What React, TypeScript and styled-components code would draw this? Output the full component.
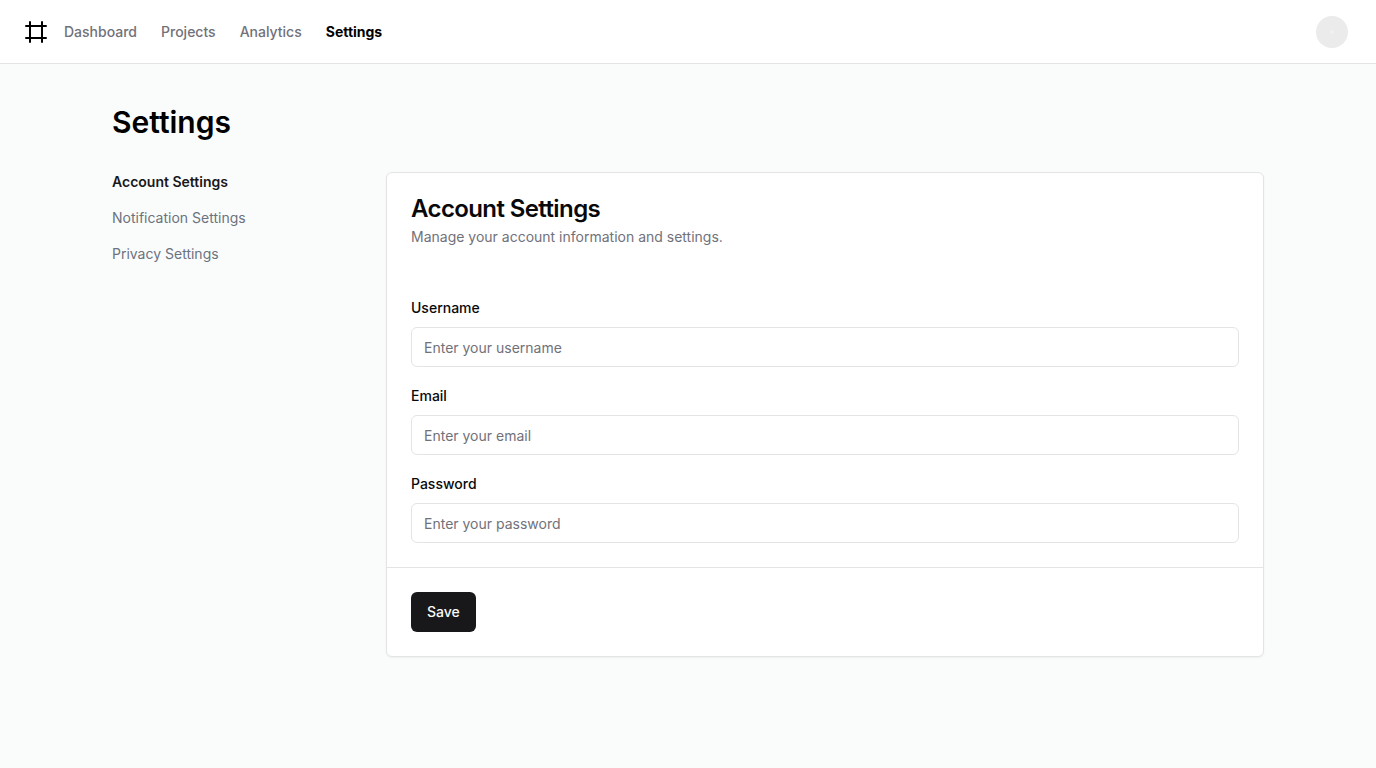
import React from "react";
import styled, { createGlobalStyle } from "styled-components";
import { Frame } from "lucide-react";

const GlobalStyle = createGlobalStyle`
  *, *::before, *::after { box-sizing: border-box; }
  body {
    margin: 0;
    background: #fafcfb;
    color: #09090b;
    font-family: Inter, "Liberation Sans", sans-serif;
    font-size: 14px;
    line-height: 20px;
    font-optical-sizing: none;
  }
  h1, h2, p { margin: 0; }
  a { text-decoration: none; color: inherit; }
`;

const Page = styled.div`
  display: flex;
  flex-direction: column;
  min-height: 100vh;
`;

const Header = styled.header`
  display: flex;
  align-items: center;
  justify-content: space-between;
  height: 64px;
  padding: 0 28px 0 24px;
  background: #ffffff;
  border-bottom: 1px solid #e4e4e7;
`;

const TopNav = styled.nav`
  display: flex;
  align-items: center;
  gap: 24px;
`;

const Logo = styled.a`
  display: flex;
  margin-right: -8px;
  color: #000000;
`;

const TopLink = styled.a<{ $active?: boolean }>`
  color: ${(p) => (p.$active ? "#000000" : "#71717a")};
  font-weight: ${(p) => (p.$active ? 700 : 500)};
`;

const Avatar = styled.button`
  display: flex;
  align-items: center;
  justify-content: center;
  width: 32px;
  height: 32px;
  padding: 0;
  border: 0;
  border-radius: 50%;
  background: #ebebeb;

  &::after {
    content: "";
    width: 4px;
    height: 4px;
    border-radius: 50%;
    background: #f0f0f0;
  }
`;

const Main = styled.main`
  display: flex;
  flex-direction: column;
  gap: 32px;
  width: 100%;
  max-width: 1200px;
  margin: 0 auto;
  padding: 40px 24px;
`;

const PageTitle = styled.h1`
  font-size: 30px;
  line-height: 36px;
  font-weight: 600;
  color: #000000;
`;

const Columns = styled.div`
  display: grid;
  grid-template-columns: 250px 1fr;
  align-items: start;
  gap: 24px;
`;

const SideNav = styled.nav`
  display: flex;
  flex-direction: column;
  gap: 16px;
`;

const SideLink = styled.a<{ $active?: boolean }>`
  color: ${(p) => (p.$active ? "#18181b" : "#6b7280")};
  font-weight: ${(p) => (p.$active ? 600 : 400)};
`;

const Card = styled.section`
  background: #ffffff;
  border: 1px solid #e4e4e7;
  border-radius: 6px;
  box-shadow: 0 1px 2px rgba(0, 0, 0, 0.05);
`;

const CardHeader = styled.div`
  padding: 24px;
`;

const CardTitle = styled.h2`
  font-size: 24px;
  line-height: 24px;
  font-weight: 600;
  letter-spacing: -0.025em;
  margin-bottom: 6px;
`;

const CardDescription = styled.p`
  color: #71717a;
`;

const Fields = styled.div`
  display: flex;
  flex-direction: column;
  gap: 16px;
  padding: 24px;
`;

const Field = styled.div`
  font-size: 16px;
  line-height: 24px;
`;

const Label = styled.label`
  font-size: 14px;
  line-height: 14px;
  font-weight: 500;
`;

const Input = styled.input`
  display: block;
  width: 100%;
  height: 40px;
  margin: 8px 0 0;
  padding: 8px 12px;
  border: 1px solid #e4e4e7;
  border-radius: 6px;
  background: #ffffff;
  color: inherit;
  font: inherit;
  font-size: 14px;
  line-height: 20px;
  &::placeholder { color: #71717a; opacity: 1; }
`;

const CardFooter = styled.div`
  padding: 24px;
  border-top: 1px solid #e4e4e7;
`;

const SaveButton = styled.button`
  height: 40px;
  padding: 8px 16px;
  border: 0;
  border-radius: 6px;
  background: #18181b;
  color: #fafafa;
  font: inherit;
  font-weight: 500;
`;

const topLinks = ["Dashboard", "Projects", "Analytics", "Settings"];
const sections = ["Account Settings", "Notification Settings", "Privacy Settings"];
const fields = [
  { id: "username", label: "Username", type: "text" },
  { id: "email", label: "Email", type: "email" },
  { id: "password", label: "Password", type: "password" },
];

export default function App() {
  return (
    <Page>
      <GlobalStyle />
      <Header>
        <TopNav>
          <Logo href="#" aria-label="Home">
            <Frame size={24} />
          </Logo>
          {topLinks.map((name) => (
            <TopLink key={name} href="#" $active={name === "Settings"}>
              {name}
            </TopLink>
          ))}
        </TopNav>
        <Avatar type="button" aria-label="Account menu" />
      </Header>
      <Main>
        <PageTitle>Settings</PageTitle>
        <Columns>
          <SideNav>
            {sections.map((name, i) => (
              <SideLink key={name} href="#" $active={i === 0}>
                {name}
              </SideLink>
            ))}
          </SideNav>
          <Card>
            <CardHeader>
              <CardTitle>Account Settings</CardTitle>
              <CardDescription>Manage your account information and settings.</CardDescription>
            </CardHeader>
            <Fields>
              {fields.map((f) => (
                <Field key={f.id}>
                  <Label htmlFor={f.id}>{f.label}</Label>
                  <Input id={f.id} type={f.type} placeholder={`Enter your ${f.id}`} />
                </Field>
              ))}
            </Fields>
            <CardFooter>
              <SaveButton type="button">Save</SaveButton>
            </CardFooter>
          </Card>
        </Columns>
      </Main>
    </Page>
  );
}
